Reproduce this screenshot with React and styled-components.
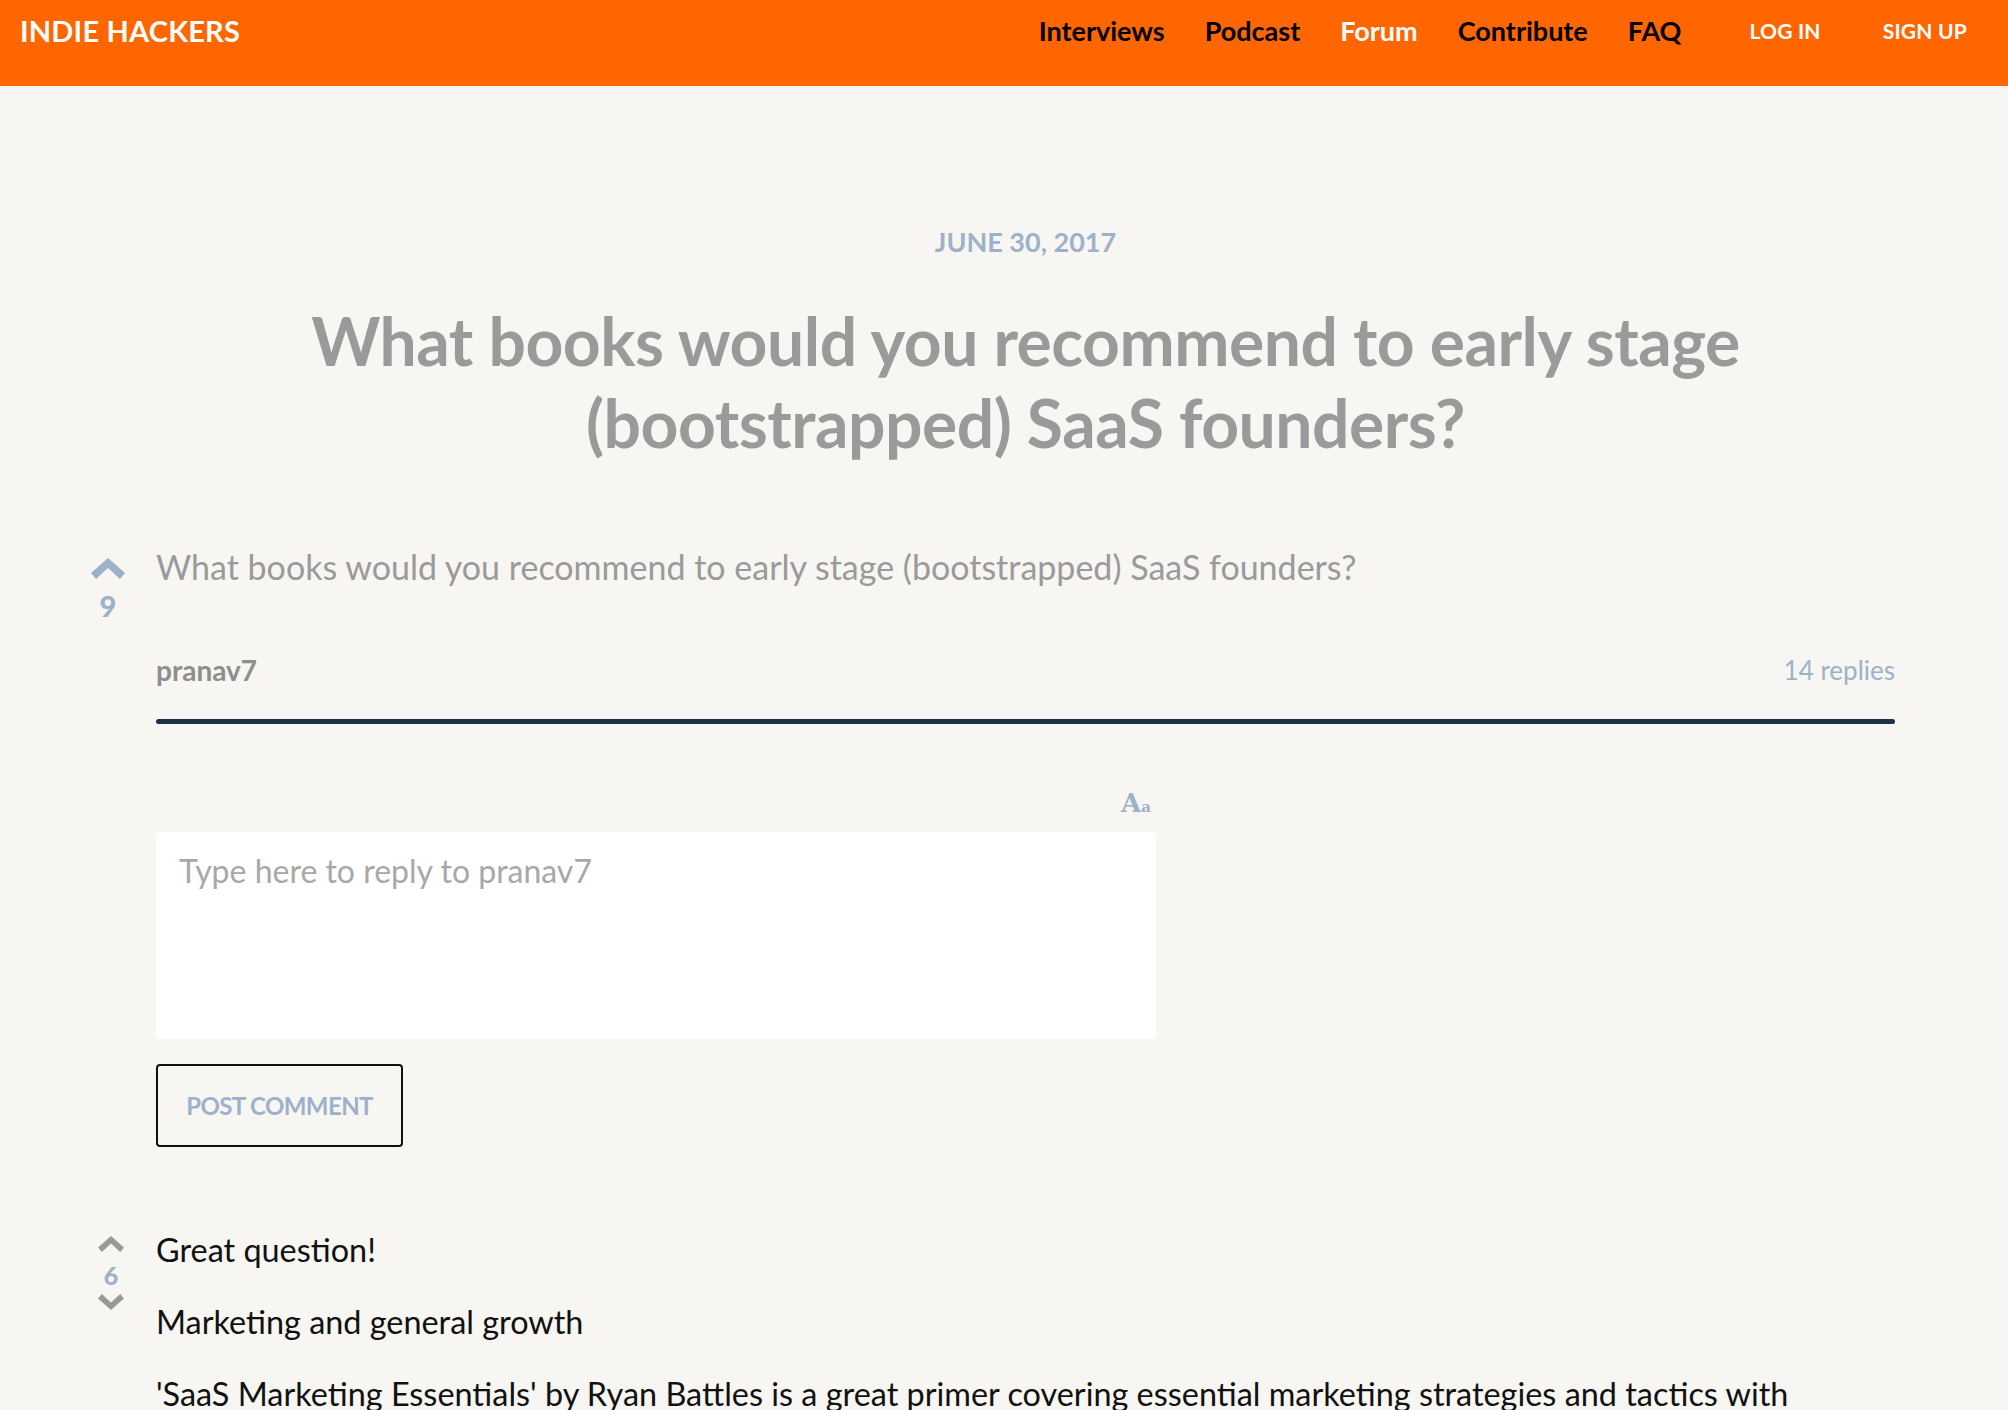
import React from 'react';
import styled, { createGlobalStyle } from 'styled-components';

const GlobalStyle = createGlobalStyle`
  html, body {
    margin: 0;
    padding: 0;
    background: #f7f6f2;
    font-family: Lato, "Open Sans", sans-serif;
    overflow: hidden;
  }
`;

const BLUE = '#9db2ca';

const Chevron = ({ up = true, size = 'lg', color }) => {
  const w = size === 'lg' ? 34 : 26;
  const h = size === 'lg' ? 21 : 16;
  return (
    <svg width={w} height={h} viewBox="0 0 34 21" preserveAspectRatio="none">
      <path
        d="M17 0 L34 15 L29 21 L17 10 L5 21 L0 15 Z"
        fill={color}
        transform={up ? '' : 'rotate(180 17 10.5)'}
      />
    </svg>
  );
};

const App = () => (
  <>
    <GlobalStyle />
    <Header>
      <Logo>INDIE HACKERS</Logo>
      <Nav>
        <NavLink>Interviews</NavLink>
        <NavLink>Podcast</NavLink>
        <NavLink active>Forum</NavLink>
        <NavLink>Contribute</NavLink>
        <NavLink>FAQ</NavLink>
      </Nav>
      <Auth>
        <AuthLink>LOG IN</AuthLink>
        <AuthLink>SIGN UP</AuthLink>
      </Auth>
    </Header>

    <Main>
      <Hero>
        <DateLine>June 30, 2017</DateLine>
        <Title>
          What books would you recommend to early stage
          <br />
          (bootstrapped) SaaS founders?
        </Title>
      </Hero>

      <Row>
        <Votes>
          <Chevron color={BLUE} />
          <Count>9</Count>
        </Votes>
        <div>
          <Question>
            What books would you recommend to early stage (bootstrapped) SaaS founders?
          </Question>
          <Meta>
            <Author>pranav7</Author>
            <Replies>14 replies</Replies>
          </Meta>
          <Divider />

          <Reply>
            <ToolRow>
              <FontToggle>
                A<small>a</small>
              </FontToggle>
            </ToolRow>
            <TextBox placeholder="Type here to reply to pranav7" />
            <PostButton>Post Comment</PostButton>
          </Reply>
        </div>
      </Row>

      <Row comment>
        <Votes small>
          <Chevron size="sm" color="#999" />
          <Count small>6</Count>
          <Chevron size="sm" up={false} color="#999" />
        </Votes>
        <Body>
          <p>Great question!</p>
          <p>Marketing and general growth</p>
          <p>
            'SaaS Marketing Essentials' by Ryan Battles is a great primer covering essential
            marketing strategies and tactics with
          </p>
        </Body>
      </Row>
    </Main>
  </>
);

export default App;

const Header = styled.header`
  display: flex;
  align-items: flex-start;
  height: 86px;
  padding: 0 41px 0 20px;
  background: #ff6600;
  line-height: 62px;
`;

const Logo = styled.div`
  color: #fff;
  font-weight: 700;
  font-size: 29px;
  letter-spacing: 0.2px;
`;

const Nav = styled.nav`
  display: flex;
  gap: 40px;
  margin-left: auto;
`;

const NavLink = styled.a`
  color: ${(p) => (p.active ? '#fff' : '#000')};
  font-weight: 700;
  font-size: 27px;
`;

const Auth = styled.div`
  display: flex;
  gap: 62px;
  margin-left: 68px;
`;

const AuthLink = styled.a`
  color: #fff;
  font-weight: 700;
  font-size: 21px;
  letter-spacing: 0.2px;
`;

const Main = styled.main`
  padding: 0 113px 0 60px;
`;

const Hero = styled.section`
  padding: 138px 0 81px 96px;
  text-align: center;
`;

const DateLine = styled.div`
  color: ${BLUE};
  font-weight: 700;
  font-size: 27px;
  line-height: 36px;
  text-transform: uppercase;
`;

const Title = styled.h1`
  margin: 40px 0 0;
  color: #9a9a9a;
  font-weight: 700;
  font-size: 66px;
  line-height: 82px;
  letter-spacing: -0.5px;
`;

const Row = styled.div`
  display: grid;
  grid-template-columns: 96px 1fr;
  margin-top: ${(p) => (p.comment ? '81px' : '0')};
`;

const Votes = styled.div`
  display: flex;
  flex-direction: column;
  align-items: center;
  padding-top: ${(p) => (p.small ? '8px' : '13px')};
  padding-left: ${(p) => (p.small ? '6px' : '0')};
`;

const Count = styled.div`
  color: ${BLUE};
  font-weight: 900;
  font-size: ${(p) => (p.small ? '25px' : '29px')};
  line-height: ${(p) => (p.small ? '34px' : '30px')};
  margin: ${(p) => (p.small ? '6px 0 2px' : '12px 0 0')};
`;

const Question = styled.div`
  color: #9a9a9a;
  font-size: 34px;
  line-height: 44px;
`;

const Meta = styled.div`
  display: flex;
  justify-content: space-between;
  margin-top: 64px;
  font-size: 26px;
  line-height: 34px;
`;

const Author = styled.span`
  color: #8e8e8e;
  font-weight: 700;
  font-size: 28px;
`;

const Replies = styled.span`
  color: ${BLUE};
`;

const Divider = styled.hr`
  margin: 32px 0 0;
  height: 5px;
  border: none;
  border-radius: 3px;
  background: #1f2f47;
`;

const Reply = styled.div`
  width: 1000px;
  margin-top: 67px;
`;

const ToolRow = styled.div`
  display: flex;
  justify-content: flex-end;
  padding-right: 5px;
  height: 25px;
`;

const FontToggle = styled.span`
  color: ${BLUE};
  font-family: "DejaVu Serif", serif;
  font-weight: 700;
  font-size: 26px;
  line-height: 25px;

  small {
    font-size: 15px;
  }
`;

const TextBox = styled.textarea`
  display: block;
  box-sizing: border-box;
  width: 1000px;
  height: 207px;
  margin-top: 16px;
  padding: 19px 23px;
  border: none;
  border-radius: 4px;
  background: #fff;
  resize: none;
  font-family: Lato, sans-serif;
  font-size: 32px;
  line-height: 40px;

  &::placeholder {
    color: #a8a8a8;
  }
`;

const PostButton = styled.button`
  display: block;
  width: 247px;
  height: 83px;
  margin-top: 25px;
  border: 2px solid #111;
  border-radius: 4px;
  background: transparent;
  color: ${BLUE};
  font-family: Lato, sans-serif;
  font-weight: 700;
  font-size: 24px;
  letter-spacing: -0.6px;
  text-transform: uppercase;
`;

const Body = styled.div`
  color: #111;
  font-size: 32.4px;
  line-height: 44px;

  p {
    margin: 0 0 28px;
  }
`;
